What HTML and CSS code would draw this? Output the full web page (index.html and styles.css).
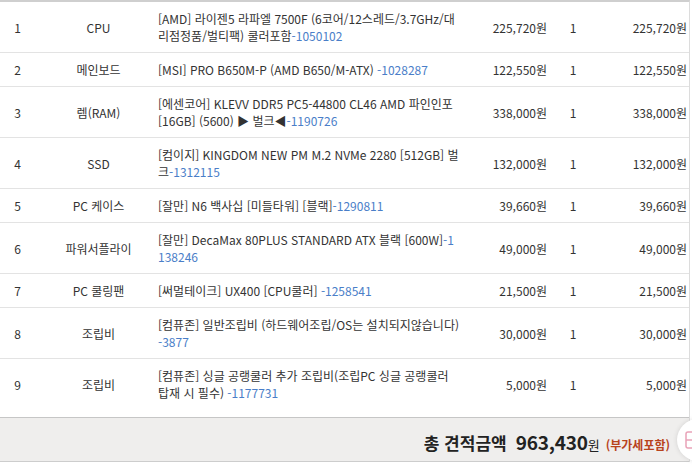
FILE: index.html
```html
<!DOCTYPE html>
<html lang="ko">
<head>
<meta charset="utf-8">
<title>견적서</title>
<link rel="stylesheet" href="styles.css">
</head>
<body>
<div class="cart">
  <div class="rows">
    <div class="row">
      <div class="c-no">1</div>
      <div class="c-cat">CPU</div>
      <div class="c-name">[AMD] 라이젠5 라파엘 7500F (6코어/12스레드/3.7GHz/대리점정품/벌티팩) 쿨러포함<span class="code">-1050102</span></div>
      <div class="c-price">225,720원</div>
      <div class="c-qty">1</div>
      <div class="c-sum">225,720원</div>
    </div>
    <div class="row">
      <div class="c-no">2</div>
      <div class="c-cat">메인보드</div>
      <div class="c-name">[MSI] PRO B650M-P (AMD B650/M-ATX) <span class="code">-1028287</span></div>
      <div class="c-price">122,550원</div>
      <div class="c-qty">1</div>
      <div class="c-sum">122,550원</div>
    </div>
    <div class="row">
      <div class="c-no">3</div>
      <div class="c-cat">렘(RAM)</div>
      <div class="c-name">[에센코어] KLEVV DDR5 PC5-44800 CL46 AMD 파인인포 [16GB] (5600) ▶ 벌크◀<span class="code">-1190726</span></div>
      <div class="c-price">338,000원</div>
      <div class="c-qty">1</div>
      <div class="c-sum">338,000원</div>
    </div>
    <div class="row">
      <div class="c-no">4</div>
      <div class="c-cat">SSD</div>
      <div class="c-name">[컴이지] KINGDOM NEW PM M.2 NVMe 2280 [512GB] 벌크<span class="code">-1312115</span></div>
      <div class="c-price">132,000원</div>
      <div class="c-qty">1</div>
      <div class="c-sum">132,000원</div>
    </div>
    <div class="row">
      <div class="c-no">5</div>
      <div class="c-cat">PC 케이스</div>
      <div class="c-name">[잘만] N6 백사십 [미들타워] [블랙]<span class="code">-1290811</span></div>
      <div class="c-price">39,660원</div>
      <div class="c-qty">1</div>
      <div class="c-sum">39,660원</div>
    </div>
    <div class="row">
      <div class="c-no">6</div>
      <div class="c-cat">파워서플라이</div>
      <div class="c-name">[잘만] DecaMax 80PLUS STANDARD ATX 블랙 [600W]<span class="code">-1138246</span></div>
      <div class="c-price">49,000원</div>
      <div class="c-qty">1</div>
      <div class="c-sum">49,000원</div>
    </div>
    <div class="row">
      <div class="c-no">7</div>
      <div class="c-cat">PC 쿨링팬</div>
      <div class="c-name">[써멀테이크] UX400 [CPU쿨러] <span class="code">-1258541</span></div>
      <div class="c-price">21,500원</div>
      <div class="c-qty">1</div>
      <div class="c-sum">21,500원</div>
    </div>
    <div class="row">
      <div class="c-no">8</div>
      <div class="c-cat">조립비</div>
      <div class="c-name">[컴퓨존] 일반조립비 (하드웨어조립/OS는 설치되지않습니다) <span class="code">-3877</span></div>
      <div class="c-price">30,000원</div>
      <div class="c-qty">1</div>
      <div class="c-sum">30,000원</div>
    </div>
    <div class="row last">
      <div class="c-no">9</div>
      <div class="c-cat">조립비</div>
      <div class="c-name">[컴퓨존] 싱글 공랭쿨러 추가 조립비(조립PC 싱글 공랭쿨러 탑재 시 필수) <span class="code">-1177731</span></div>
      <div class="c-price">5,000원</div>
      <div class="c-qty">1</div>
      <div class="c-sum">5,000원</div>
    </div>
  </div>
  <div class="total">
    <span class="t-label">총 견적금액</span>
    <span class="t-amount">963,430</span><span class="t-won">원</span>
    <span class="t-vat">(부가세포함)</span>
  </div>
</div>
<button class="float-btn" type="button" aria-label="메뉴">
  <svg width="24" height="24" viewBox="0 0 24 24" fill="none" stroke="#e9a3b8" stroke-width="1.5">
    <rect x="3" y="4" width="16" height="16" rx="2"/>
    <line x1="3" y1="12" x2="19" y2="12"/>
  </svg>
</button>
</body>
</html>
```

FILE: styles.css
```css
* { box-sizing: border-box; }
html, body { margin: 0; padding: 0; background: #fff; }
body {
  position: relative;
  width: 692px;
  height: 466px;
  overflow: hidden;
  font-family: "Noto Sans CJK KR", "Noto Sans", sans-serif;
  font-size: 12px;
  color: #333;
}
.cart {
  width: 690px;
  border-top: 2px solid #cfcfcf;
  border-right: 1px solid #dcdcdc;
}
.row {
  display: grid;
  grid-template-columns: 35px 123px 302px 87px 52px 1fr;
  align-items: center;
  padding: 8px 0;
  line-height: 17px;
  border-bottom: 1px solid #e3e3e3;
}
.row.last { border-bottom: none; }
.c-no, .c-cat, .c-qty { text-align: center; }
.c-cat { padding-left: 4px; }
.c-name { word-break: break-all; }
.code { color: #4a7ec8; }
.c-price { text-align: right; }
.c-sum { text-align: right; padding-right: 2px; }
.total {
  margin-top: 8px;
  height: 45px;
  background: #efeeed;
  border-top: 1px solid #c6c6c6;
  border-bottom: 1px solid #cdcdcd;
  display: flex;
  justify-content: flex-end;
  align-items: baseline;
  padding: 10px 19px 0 0;
  color: #222;
}
.t-label { font-size: 17px; font-weight: 700; margin-right: 9px; }
.t-amount { font-size: 19px; font-weight: 700; letter-spacing: -0.2px; }
.t-won { font-size: 13px; margin-right: 6px; }
.t-vat { font-size: 12px; font-weight: 700; color: #b8431c; }
.float-btn {
  position: absolute;
  left: 677px;
  top: 419px;
  width: 42px;
  height: 42px;
  padding: 0 0 0 6px;
  border: none;
  border-radius: 50%;
  background: #fff;
  box-shadow: 0 0 5px rgba(0, 0, 0, 0.12);
  display: flex;
  align-items: center;
  justify-content: flex-start;
}
```
